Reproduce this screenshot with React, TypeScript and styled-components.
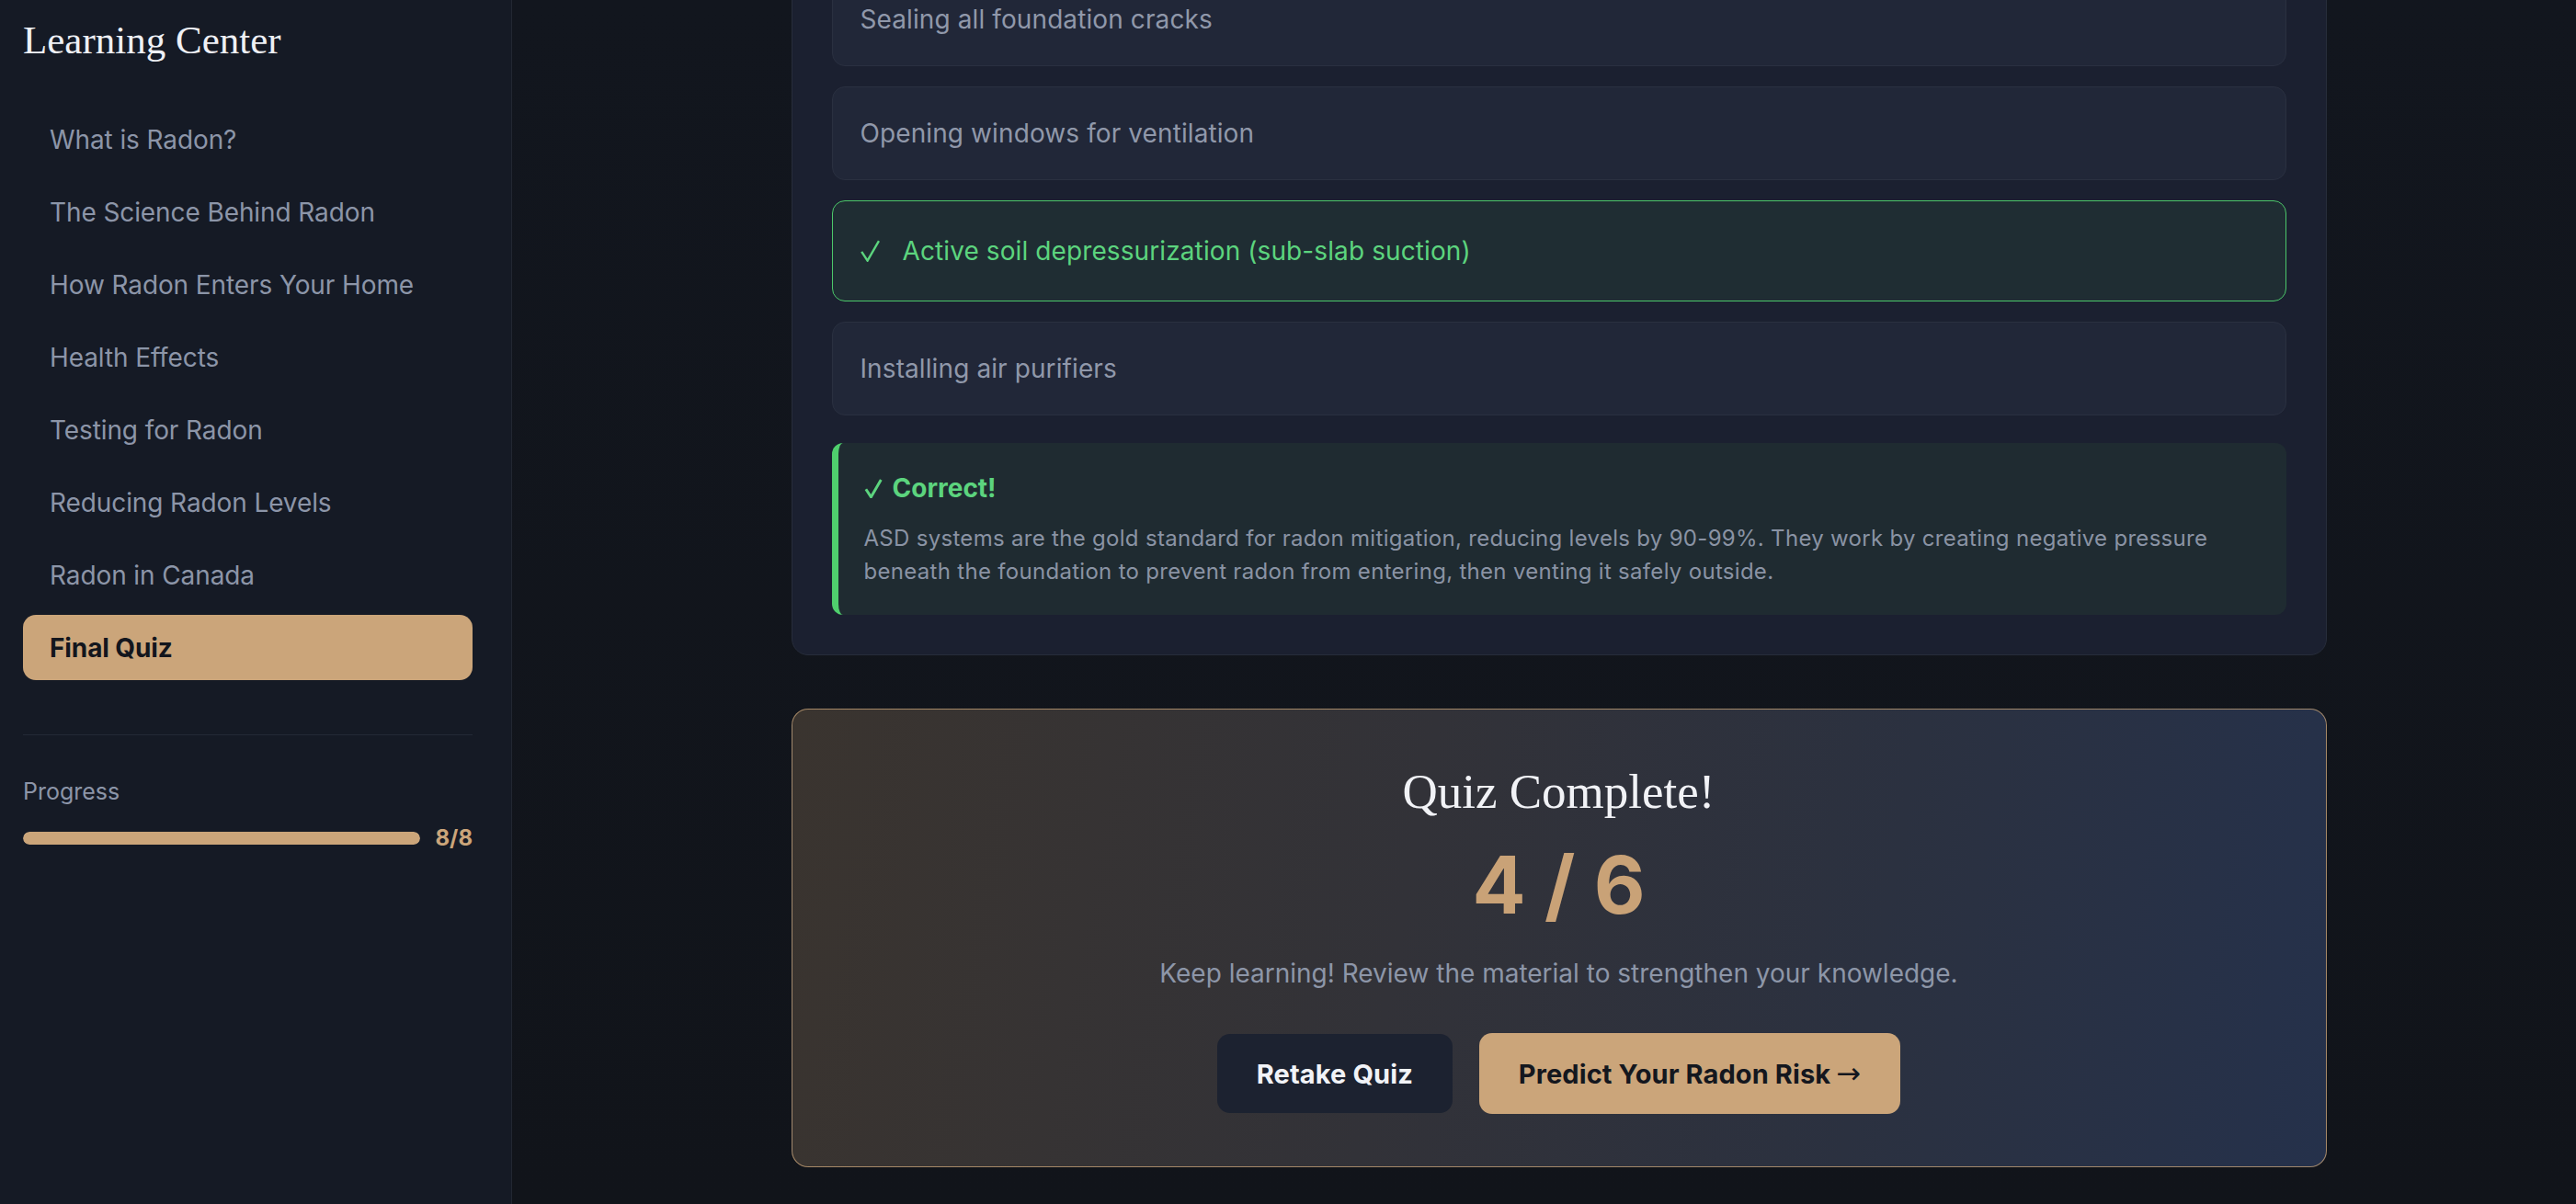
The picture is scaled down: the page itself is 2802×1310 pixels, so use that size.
import React from "react";
import styled, { createGlobalStyle } from "styled-components";

const GlobalStyle = createGlobalStyle`
  html, body {
    margin: 0;
    padding: 0;
    background: #12151c;
  }
  body {
    font-family: Inter, "Liberation Sans", sans-serif;
  }
  * {
    box-sizing: border-box;
  }
`;

const Layout = styled.div`
  display: flex;
  width: 2802px;
  height: 1310px;
  overflow: hidden;
  background: linear-gradient(180deg, #12161e 0%, #11141a 100%);
`;

const Sidebar = styled.aside`
  width: 557px;
  flex: none;
  background: #151a25;
  border-right: 1px solid #222732;
  padding: 19px 42px 0 25px;
  display: flex;
  flex-direction: column;
`;

const Brand = styled.h1`
  margin: 0 0 47px;
  font-family: "Liberation Serif", serif;
  font-weight: 400;
  font-size: 43px;
  line-height: 50px;
  color: #eef0f5;
`;

const Nav = styled.nav`
  display: flex;
  flex-direction: column;
  gap: 8px;
`;

const NavItem = styled.div<{ $active?: boolean }>`
  height: 71px;
  display: flex;
  align-items: center;
  padding-left: 29px;
  border-radius: 14px;
  font-size: 28px;
  letter-spacing: -0.1px;
  background: ${(p) => (p.$active ? "#cba57a" : "transparent")};
  color: ${(p) => (p.$active ? "#13161d" : "#8c95a8")};
  font-weight: ${(p) => (p.$active ? 700 : 400)};
`;

const Divider = styled.div`
  margin-top: 59px;
  height: 1px;
  background: #232936;
`;

const ProgressLabel = styled.div`
  margin-top: 44px;
  font-size: 25px;
  line-height: 35px;
  color: #8c95a8;
`;

const ProgressRow = styled.div`
  margin-top: 15px;
  display: flex;
  align-items: center;
  gap: 16px;
`;

const Track = styled.div`
  flex: 1;
  height: 14px;
  border-radius: 7px;
  background: #262c39;
  overflow: hidden;
`;

const Fill = styled.div`
  height: 100%;
  border-radius: 7px;
  background: #cba57a;
`;

const ProgressCount = styled.span`
  font-size: 24px;
  line-height: 35px;
  font-weight: 700;
  color: #cba57a;
`;

const Main = styled.main`
  flex: 1;
  padding-left: 32px;
  overflow: hidden;
`;

const Content = styled.div`
  max-width: 1670px;
  margin: -74px auto 0;
  display: flex;
  flex-direction: column;
  gap: 58px;
`;

const QuestionCard = styled.section`
  background: #1b2030;
  border: 1px solid #272d3b;
  border-radius: 18px;
  padding: 43px;
`;

const Options = styled.div`
  display: flex;
  flex-direction: column;
  gap: 22px;
`;

const Option = styled.div<{ $correct?: boolean }>`
  height: ${(p) => (p.$correct ? "110px" : "102px")};
  display: flex;
  align-items: center;
  gap: 25px;
  padding: 0 30px;
  border-radius: 14px;
  font-size: 28px;
  letter-spacing: 0.1px;
  background: ${(p) => (p.$correct ? "#1f2d33" : "#212738")};
  border: ${(p) => (p.$correct ? "1.5px solid #4cc76a" : "1px solid #2a3040")};
  color: ${(p) => (p.$correct ? "#5cd47e" : "#9098aa")};
`;

const Feedback = styled.div`
  margin-top: 30px;
  background: #1f2b31;
  border-left: 7px solid #4fcf6d;
  border-radius: 12px;
  padding: 30px 35px 29px 28px;
`;

const FeedbackTitle = styled.div`
  display: flex;
  align-items: center;
  gap: 11px;
  font-size: 28px;
  line-height: 39px;
  font-weight: 700;
  color: #5cd47e;
`;

const FeedbackText = styled.p`
  margin: 17px 0 0;
  font-size: 24px;
  line-height: 36px;
  letter-spacing: 0.3px;
  color: #8a93a4;
`;

const ResultCard = styled.section`
  border: 1px solid rgba(203, 165, 122, 0.75);
  border-radius: 18px;
  background: linear-gradient(100deg, #3a342f 0%, #323238 40%, #2b3140 70%, #25314b 100%);
  padding: 58px 40px 57px;
  display: flex;
  flex-direction: column;
  align-items: center;
`;

const ResultTitle = styled.h2`
  margin: 0;
  font-family: "Liberation Serif", serif;
  font-weight: 400;
  font-size: 53px;
  line-height: 62px;
  color: #f1f2f6;
`;

const Score = styled.div`
  margin-top: 28px;
  font-size: 86px;
  line-height: 86px;
  font-weight: 700;
  color: #c9a277;
`;

const ResultText = styled.p`
  margin: 32px 0 0;
  font-size: 28px;
  line-height: 42px;
  color: #8d96a8;
`;

const Actions = styled.div`
  margin-top: 44px;
  display: flex;
  align-items: center;
  gap: 29px;
`;

const Button = styled.button<{ $primary?: boolean }>`
  height: ${(p) => (p.$primary ? "88px" : "86px")};
  padding: 0 43px;
  border: none;
  border-radius: 14px;
  display: inline-flex;
  align-items: center;
  gap: 6px;
  font-family: Inter, "Liberation Sans", sans-serif;
  font-size: 29px;
  font-weight: 700;
  letter-spacing: 0.1px;
  background: ${(p) => (p.$primary ? "#cba57a" : "#1c2230")};
  color: ${(p) => (p.$primary ? "#14171e" : "#f1f3f7")};
  cursor: pointer;
`;

const Arrow = styled.span`
  font-family: "DejaVu Sans", sans-serif;
  font-weight: 400;
  font-size: 32px;
  line-height: 1;
`;

const CheckIcon: React.FC<{ w: number; h: number; sw: number }> = ({ w, h, sw }) => (
  <svg width={w} height={h} viewBox="0 0 21 24" fill="none">
    <path
      d="M1.2 12.8 L7.6 22.6 L20 1.2"
      stroke="currentColor"
      strokeWidth={sw}
      strokeLinejoin="miter"
    />
  </svg>
);

const navItems = [
  "What is Radon?",
  "The Science Behind Radon",
  "How Radon Enters Your Home",
  "Health Effects",
  "Testing for Radon",
  "Reducing Radon Levels",
  "Radon in Canada",
  "Final Quiz",
];

const options = [
  { text: "Sealing all foundation cracks", correct: false },
  { text: "Opening windows for ventilation", correct: false },
  { text: "Active soil depressurization (sub-slab suction)", correct: true },
  { text: "Installing air purifiers", correct: false },
];

export default function App() {
  return (
    <>
      <GlobalStyle />
      <Layout>
        <Sidebar>
          <Brand>Learning Center</Brand>
          <Nav>
            {navItems.map((item) => (
              <NavItem key={item} $active={item === "Final Quiz"}>
                {item}
              </NavItem>
            ))}
          </Nav>
          <Divider />
          <ProgressLabel>Progress</ProgressLabel>
          <ProgressRow>
            <Track>
              <Fill style={{ width: `${(8 / 8) * 100}%` }} />
            </Track>
            <ProgressCount>8/8</ProgressCount>
          </ProgressRow>
        </Sidebar>
        <Main>
          <Content>
            <QuestionCard>
              <Options>
                {options.map((o) => (
                  <Option key={o.text} $correct={o.correct}>
                    {o.correct && <CheckIcon w={21} h={24} sw={2.4} />}
                    <span>{o.text}</span>
                  </Option>
                ))}
              </Options>
              <Feedback>
                <FeedbackTitle>
                  <CheckIcon w={20} h={21} sw={3.4} />
                  <span>Correct!</span>
                </FeedbackTitle>
                <FeedbackText>
                  ASD systems are the gold standard for radon mitigation, reducing levels by 90-99%. They work by
                  creating negative pressure beneath the foundation to prevent radon from entering, then venting it
                  safely outside.
                </FeedbackText>
              </Feedback>
            </QuestionCard>
            <ResultCard>
              <ResultTitle>Quiz Complete!</ResultTitle>
              <Score>4 / 6</Score>
              <ResultText>Keep learning! Review the material to strengthen your knowledge.</ResultText>
              <Actions>
                <Button>Retake Quiz</Button>
                <Button $primary>
                  <span>Predict Your Radon Risk</span>
                  <Arrow>→</Arrow>
                </Button>
              </Actions>
            </ResultCard>
          </Content>
        </Main>
      </Layout>
    </>
  );
}
